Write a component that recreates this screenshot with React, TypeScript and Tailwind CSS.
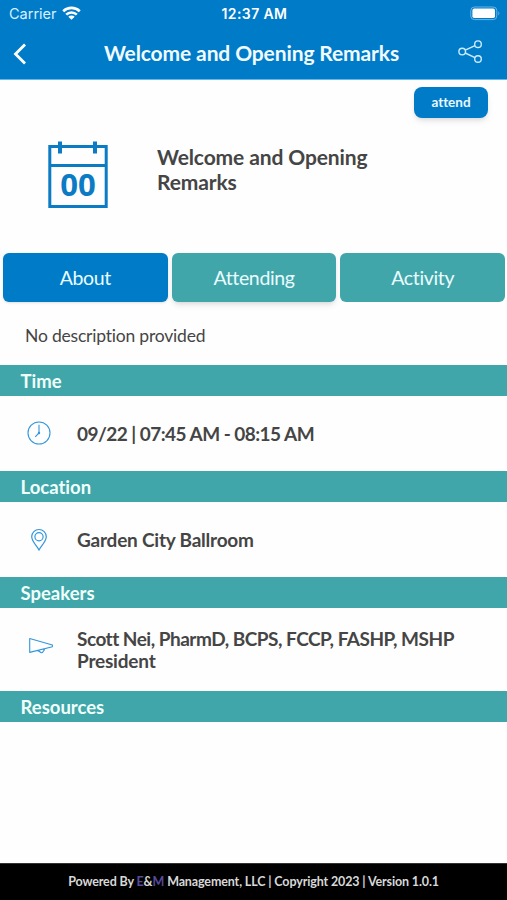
import type { ReactNode } from "react";

function StatusBar() {
  return (
    <div className="grid h-7 grid-cols-3 items-center pl-[9px] pr-[7px] font-['Inter',sans-serif] text-white">
      <div className="flex items-center gap-[5px]">
        <span className="text-[14.5px] leading-5 text-[#d8f0ff]">Carrier</span>
        <svg className="mb-0.5" width="19" height="14" viewBox="0 0 19 14" fill="none" stroke="white" strokeWidth="2.6">
          <path d="M1.2 5.2a12 12 0 0 1 16.6 0" />
          <path d="M4.2 8.6a7.6 7.6 0 0 1 10.6 0" />
          <path d="M9.5 13.8 6.3 10.8a4.5 4.5 0 0 1 6.4 0z" fill="white" stroke="none" />
        </svg>
      </div>
      <span className="whitespace-nowrap text-center text-[14px] font-semibold leading-5 tracking-[0.4px]">12:37 AM</span>
      <svg className="mb-0.5 justify-self-end" width="30" height="15" viewBox="0 0 30 15" fill="none">
        <rect x="0.8" y="1" width="26" height="12.6" rx="3.6" stroke="#69b5e5" />
        <rect x="2.4" y="2.6" width="22.6" height="9.4" rx="1.8" fill="white" />
        <path d="M28.4 5.2c1.3.8 1.3 3.4 0 4.2z" fill="#69b5e5" />
      </svg>
    </div>
  );
}

function NavBar() {
  return (
    <div className="flex h-[52px] items-center justify-between border-b border-[#62b8ea] pl-[13px] pr-[24px]">
      <svg width="14" height="22" viewBox="0 0 14 22" fill="none" stroke="white" strokeWidth="2.8">
        <path d="M12 1.5 2.5 11 12 20.5" />
      </svg>
      <h1 className="whitespace-nowrap pb-0.5 pl-[18px] text-[21px] font-bold leading-6 tracking-[-0.12px] text-[#f1faff]">Welcome and Opening Remarks</h1>
      <svg className="mb-1" width="25" height="24" viewBox="0 0 25 24" fill="none" stroke="#ccecff" strokeWidth="1.4">
        <circle cx="4.2" cy="11.6" r="3.3" />
        <circle cx="20" cy="4.2" r="3.3" />
        <circle cx="20" cy="19" r="3.3" />
        <path d="m7.2 10.2 9.8-4.6M7.2 13l9.8 4.6" />
      </svg>
    </div>
  );
}

function CalendarIcon() {
  return (
    <svg width="60" height="69" viewBox="0 0 60 69" fill="none" stroke="#0b7bc4" strokeWidth="3">
      <path d="M1.8 6.5h56.4v60H1.8zM1.8 25.4h56.4" />
      <path d="M12 1.4v12M47 1.4v12" strokeWidth="4" />
      <text x="30" y="56.2" textAnchor="middle" fill="#0b7bc4" stroke="none" className="font-['Open_Sans',sans-serif] text-[31px] font-bold">00</text>
    </svg>
  );
}

function ClockIcon() {
  return (
    <svg className="mb-px" width="24" height="24" viewBox="0 0 24 24" fill="none" stroke="#3296dc">
      <circle cx="12" cy="12" r="11" strokeWidth="1.1" />
      <path d="M12 3.8V12l-3.8 3.8" strokeWidth="1.1" />
      <circle cx="12" cy="12" r="1.2" fill="#3296dc" stroke="none" />
    </svg>
  );
}

function PinIcon() {
  return (
    <svg width="24" height="24" viewBox="0 0 24 24" fill="none" stroke="#3296dc" strokeWidth="1.2">
      <path d="M12 22C9.7 17.8 4.7 13.2 4.7 8.8a7.3 7.3 0 0 1 14.6 0C19.3 13.2 14.3 17.8 12 22z" />
      <circle cx="12" cy="8.8" r="4.1" />
    </svg>
  );
}

function MegaphoneIcon() {
  return (
    <svg width="26" height="24" viewBox="0 0 26 24" fill="none" stroke="#3296dc" strokeWidth="1.1" strokeLinejoin="round">
      <path d="M1.7 4.5 24.4 11v1.8L1.7 18.4zM10 16.4c.6 1.2 1.6.8 2 1.5.8 1.2 2.5 1.1 3-.2.3-.8 1.2-.7 1.5-2.8" />
    </svg>
  );
}

function Section({ title, children }: { title: string; children?: ReactNode }) {
  return (
    <section>
      <h3 className="h-[31px] bg-[#40a6a9] pl-[20.5px] text-[18.5px] font-bold leading-[32px] text-[#f0fffb]">{title}</h3>
      {children}
    </section>
  );
}

const tabs = [
  { label: "About", style: "bg-[#007bc8] shadow-sm" },
  { label: "Attending", style: "bg-[#40a6a9] shadow-md" },
  { label: "Activity", style: "bg-[#40a6a9]" },
];

export default function App() {
  return (
    <div className="flex h-[900px] w-[507px] flex-col overflow-hidden bg-[#fefefe] font-['Lato',sans-serif] text-[#454545] [font-variant-ligatures:none]">
      <header className="bg-[#007bc8]">
        <StatusBar />
        <NavBar />
      </header>

      <div className="flex justify-end pr-[19px] pt-[7px]">
        <button className="h-[31px] w-[74px] rounded-lg bg-[#007bc8] text-[13.5px] font-bold text-[#eaf7ff] shadow-md">attend</button>
      </div>

      <div className="flex h-[135px] items-start pl-[48px] pt-[22px]">
        <CalendarIcon />
        <h2 className="ml-[49px] w-[240px] pt-[4px] text-[21px] font-bold leading-[25px] tracking-[-0.12px]">Welcome and Opening Remarks</h2>
      </div>

      <div className="flex gap-1 pl-[3px] pr-[2px]">
        {tabs.map((tab) => (
          <button key={tab.label} className={`h-[49px] flex-1 rounded-md text-[19.5px] tracking-[-0.35px] text-[#eafcff] ${tab.style}`}>{tab.label}</button>
        ))}
      </div>

      <p className="h-[63px] pl-[25px] pt-[22px] text-[17.5px] leading-6 tracking-[-0.2px]">No description provided</p>

      <Section title="Time">
        <div className="flex h-[75px] items-center gap-[26px] pl-[27px] text-[19px] font-bold">
          <ClockIcon />
          <span className="pt-px tracking-[-0.54px]">09/22 | 07:45 AM - 08:15 AM</span>
        </div>
      </Section>
      <Section title="Location">
        <div className="flex h-[75px] items-center gap-[26px] pl-[27px] text-[19px] font-bold">
          <PinIcon />
          <span className="pt-px tracking-[-0.22px]">Garden City Ballroom</span>
        </div>
      </Section>
      <Section title="Speakers">
        <div className="flex h-[83px] items-start gap-[23px] pl-[28px] pt-[20px] text-[19px] font-bold leading-[22px]">
          <div className="pt-[6px]"><MegaphoneIcon /></div>
          <span className="tracking-[-0.2px]"><span className="tracking-[-0.5px]">Scott Nei, PharmD, BCPS, FCCP, FASHP, MSHP</span><br />President</span>
        </div>
      </Section>
      <Section title="Resources" />

      <footer className="mt-auto h-[37px] border-t border-[#333333] bg-black text-center text-[12.5px] font-bold leading-[36px] tracking-[-0.13px] text-[#d8d8d8]">
        Powered By <span className="text-[#554a9b]">E</span>&amp;<span className="text-[#554a9b]">M</span> Management, LLC | Copyright 2023 | Version 1.0.1
      </footer>
    </div>
  );
}
